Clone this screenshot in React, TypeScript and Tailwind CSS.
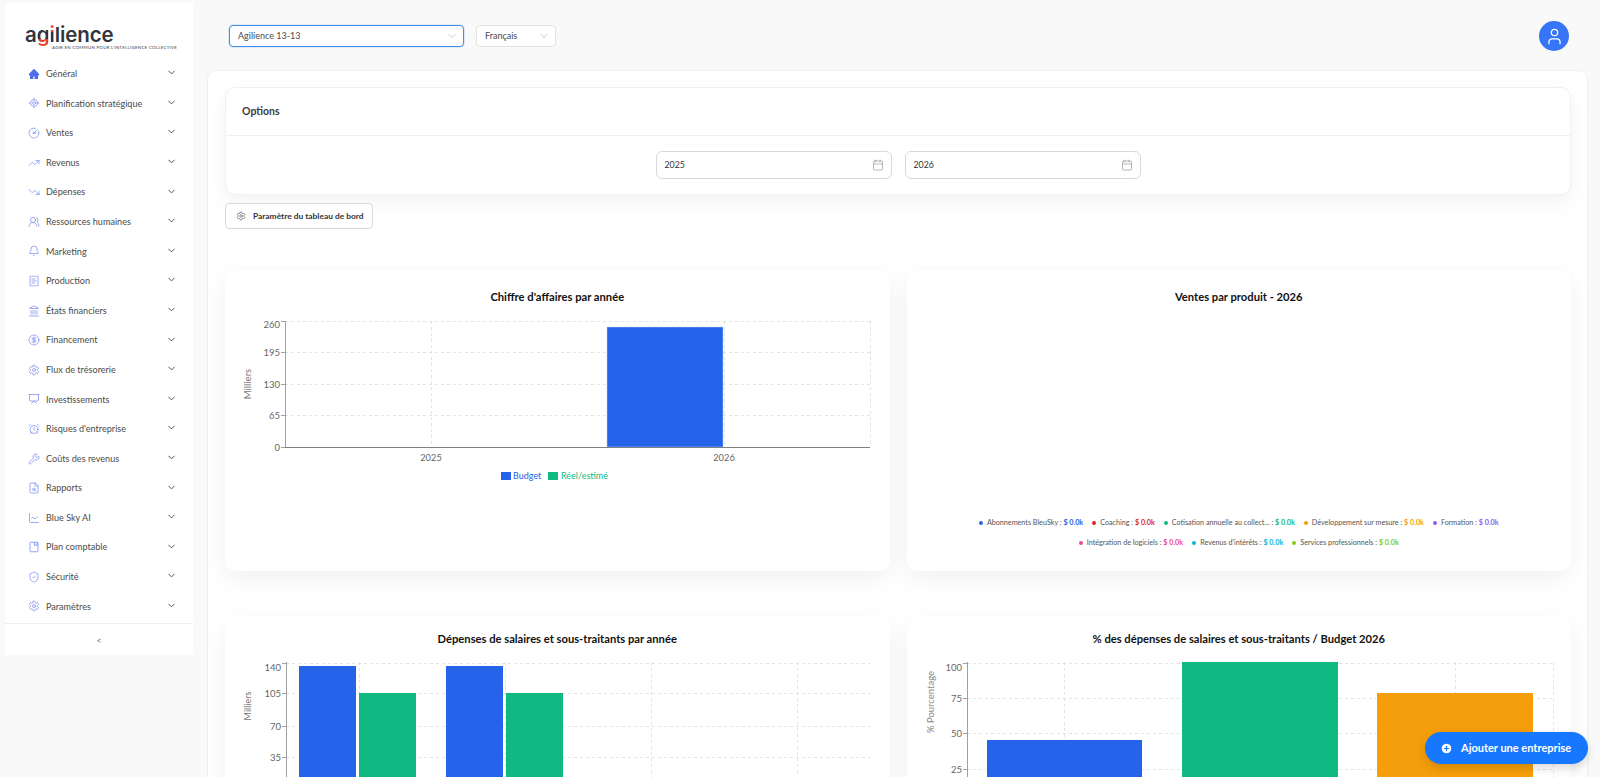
import {
  LocateFixed, CircleGauge, TrendingUp, TrendingDown, UsersRound, Bell, ReceiptText, Landmark, CircleDollarSign,
  Settings, Presentation, AlarmClock, Wrench, FileSearch, ChartLine, ShieldCheck, ChevronDown,
  Calendar, User, CirclePlus,
} from "lucide-react";
import { AiFillHome } from "react-icons/ai";

const font = "font-['Lato','Noto_Sans',sans-serif]";

function PlanIcon({ className }: { className?: string }) {
  return (
    <svg viewBox="0 0 24 24" fill="none" stroke="currentColor" strokeWidth={1.6} className={className}>
      <rect x="4" y="2.5" width="16" height="19" rx="1.5" />
      <path d="M13 2.5v7l2.5-2 2.5 2v-7" />
    </svg>
  );
}

const menuItems = [
  { label: "Général", icon: AiFillHome, solid: true },
  { label: "Planification stratégique", icon: LocateFixed },
  { label: "Ventes", icon: CircleGauge },
  { label: "Revenus", icon: TrendingUp },
  { label: "Dépenses", icon: TrendingDown },
  { label: "Ressources humaines", icon: UsersRound },
  { label: "Marketing", icon: Bell },
  { label: "Production", icon: ReceiptText },
  { label: "États financiers", icon: Landmark },
  { label: "Financement", icon: CircleDollarSign },
  { label: "Flux de trésorerie", icon: Settings },
  { label: "Investissements", icon: Presentation },
  { label: "Risques d'entreprise", icon: AlarmClock },
  { label: "Coûts des revenus", icon: Wrench },
  { label: "Rapports", icon: FileSearch },
  { label: "Blue Sky AI", icon: ChartLine },
  { label: "Plan comptable", icon: PlanIcon },
  { label: "Sécurité", icon: ShieldCheck },
  { label: "Paramètres", icon: Settings },
];

const legendTop = [
  { name: "Abonnements BleuSky", dot: "bg-[#2563eb]", value: "text-[#2563eb]" },
  { name: "Coaching", dot: "bg-[#dc2626]", value: "text-[#dc2626]" },
  { name: "Cotisation annuelle au collect...", dot: "bg-[#10b981]", value: "text-[#10b981]" },
  { name: "Développement sur mesure", dot: "bg-[#f59e0b]", value: "text-[#f59e0b]" },
  { name: "Formation", dot: "bg-[#8b5cf6]", value: "text-[#8b5cf6]" },
];
const legendBottom = [
  { name: "Intégration de logiciels", dot: "bg-[#ec4899]", value: "text-[#ec4899]" },
  { name: "Revenus d'intérêts", dot: "bg-[#06b6d4]", value: "text-[#06b6d4]" },
  { name: "Services professionnels", dot: "bg-[#84cc16]", value: "text-[#84cc16]" },
];

function Sidebar() {
  return (
    <aside className="w-[188px] ml-[5px] mt-[3px] h-[652px] shrink-0 bg-white flex flex-col">
      <div className="h-[56px] pl-[20px] pt-[20px] shrink-0">
        <div className="relative leading-none">
          <div className="font-['Inter',sans-serif] font-semibold text-[20.5px] tracking-[-0.1px] text-[#33353c] leading-[24px]">
            a<span className="bg-[linear-gradient(180deg,#33353c_68%,#e5432f_68%)] bg-clip-text text-transparent">g</span>
            <span className="bg-[linear-gradient(180deg,#e5432f_42%,#33353c_42%)] bg-clip-text text-transparent">i</span>lience
          </div>
          <div className="absolute left-[27px] top-[22px] text-[4.5px] leading-[6px] whitespace-nowrap tracking-[0.2px] text-[#45484f]">
            AGIR EN COMMUN POUR L'INTELLIGENCE COLLECTIVE
          </div>
        </div>
      </div>
      <nav className="flex flex-col">
        {menuItems.map((item) => (
          <div key={item.label} className="h-[29.6px] pl-[23px] pr-[16px] flex items-center">
            <item.icon
              className={`w-[12px] h-[12px] mr-[6px] shrink-0 ${item.solid ? "text-[#4f6fe8]" : "text-[#7c8ff0]"}`}
              strokeWidth={1.5}
            />
            <span className="text-[9.1px] text-[#4b4b4b] whitespace-nowrap">{item.label}</span>
            <ChevronDown className="w-[11px] h-[11px] ml-auto -mt-[2px] text-[#444]" strokeWidth={2} />
          </div>
        ))}
      </nav>
      <div className="mt-[2px] pt-[2px] border-t border-[#eeeeee] flex-1 flex items-center justify-center text-[9px] text-[#777]">
        &lt;
      </div>
    </aside>
  );
}

function Dropdown({ label, className }: { label: string; className: string }) {
  return (
    <div className={`h-[22px] bg-white rounded-[4px] flex items-center justify-between pl-[8px] pr-[5px] ${className}`}>
      <span className="text-[9px] text-[#4b4b4b]">{label}</span>
      <ChevronDown className="w-[12px] h-[12px] text-[#b5b5b5]" strokeWidth={1.5} />
    </div>
  );
}

function DateField({ value }: { value: string }) {
  return (
    <div className="w-[236px] h-[28px] border border-[#d9d9d9] rounded-[6px] bg-white flex items-center justify-between pl-[8px] pr-[7px]">
      <span className="text-[8.8px] text-[#333]">{value}</span>
      <Calendar className="w-[12px] h-[12px] text-[#9a9a9a]" strokeWidth={1.4} />
    </div>
  );
}

function Grid({ x0, x1, ys, xs, top, bottom }: { x0: number; x1: number; ys: number[]; xs: number[]; top: number; bottom: number }) {
  return (
    <g stroke="#e3e3e3" strokeWidth="1" strokeDasharray="3 3" shapeRendering="crispEdges">
      {ys.map((y) => (
        <line key={y} x1={x0} x2={x1} y1={y} y2={y} />
      ))}
      {xs.map((x) => (
        <line key={x} x1={x} x2={x} y1={top} y2={bottom} />
      ))}
    </g>
  );
}

function YAxis({ x, top, bottom, ticks }: { x: number; top: number; bottom: number; ticks: { y: number; label: string; ty?: number }[] }) {
  return (
    <g>
      <line x1={x} x2={x} y1={top} y2={bottom} stroke="#a0a0a0" shapeRendering="crispEdges" />
      {ticks.map((t) => (
        <g key={t.label}>
          <line x1={x - 4} x2={x} y1={t.y} y2={t.y} stroke="#a0a0a0" shapeRendering="crispEdges" />
          <text x={x - 5} y={(t.ty ?? t.y) + 3.5} textAnchor="end" fontSize="9.5" fill="#666">
            {t.label}
          </text>
        </g>
      ))}
    </g>
  );
}

function RevenueChart() {
  // coordinates are local to the card, which starts at x=225, y=270
  return (
    <svg width="664" height="225" className={`absolute left-[1px] top-[48px] ${font}`}>
      <Grid x0={59} x1={644} ys={[3, 34, 66, 97]} xs={[205, 498, 644]} top={3} bottom={129} />
      <rect x={381} y={9} width={116} height={120} fill="#2563eb" stroke="#bcd0f7" strokeWidth="0.5" />
      <YAxis x={59} top={3} bottom={129} ticks={[{ y: 3, label: "260", ty: 6 }, { y: 34, label: "195" }, { y: 66, label: "130" }, { y: 97, label: "65" }, { y: 129, label: "0" }]} />
      <line x1={59} x2={644} y1={129} y2={129} stroke="#808080" shapeRendering="crispEdges" />
      <text x={205} y={143} textAnchor="middle" fontSize="9.3" fill="#666">2025</text>
      <text x={498} y={143} textAnchor="middle" fontSize="9.3" fill="#666">2026</text>
      <text transform="translate(25 66) rotate(-90)" textAnchor="middle" fontSize="9.5" fill="#777">Milliers</text>
      <rect x={275} y={154} width={10} height={8} fill="#2563eb" />
      <text x={287} y={161} fontSize="9" fill="#2563eb">Budget</text>
      <rect x={322} y={154} width={10} height={8} fill="#10b981" />
      <text x={335} y={161} fontSize="9" fill="#10b981">Réel/estimé</text>
    </svg>
  );
}

function SalaryChart() {
  // card starts at x=225, y=617
  return (
    <svg width="664" height="115" className={`absolute left-[1px] top-[45px] ${font}`}>
      <Grid x0={60} x1={644} ys={[1, 31, 64, 95]} xs={[133, 279, 425, 571]} top={0} bottom={115} />
      <rect x={73} y={4} width={57} height={111} fill="#2563eb" />
      <rect x={133} y={31} width={57} height={84} fill="#10b981" />
      <rect x={220} y={4} width={57} height={111} fill="#2563eb" />
      <rect x={280} y={31} width={57} height={84} fill="#10b981" />
      <YAxis x={60} top={0} bottom={115} ticks={[{ y: 1, label: "140", ty: 5 }, { y: 31, label: "105" }, { y: 64, label: "70" }, { y: 95, label: "35" }]} />
      <text transform="translate(25 44) rotate(-90)" textAnchor="middle" fontSize="9" fill="#777">Milliers</text>
    </svg>
  );
}

function PercentChart() {
  // card starts at x=907, y=617
  return (
    <svg width="664" height="115" className={`absolute left-0 top-[45px] ${font}`}>
      <Grid x0={60} x1={646} ys={[1, 36, 71, 107]} xs={[157, 353, 548, 646]} top={0} bottom={115} />
      <rect x={80} y={78} width={155} height={37} fill="#2563eb" />
      <rect x={275} y={0} width={156} height={115} fill="#10b981" />
      <rect x={470} y={31} width={156} height={84} fill="#f59e0b" />
      <YAxis x={60} top={0} bottom={115} ticks={[{ y: 1, label: "100", ty: 5 }, { y: 36, label: "75" }, { y: 71, label: "50" }, { y: 107, label: "25" }]} />
      <text transform="translate(27 40) rotate(-90)" textAnchor="middle" fontSize="9.5" fill="#888">% Pourcentage</text>
    </svg>
  );
}

function ChartCard({ title, children, titleClass }: { title: string; children?: React.ReactNode; titleClass: string }) {
  return (
    <div className="relative h-[301px] bg-white rounded-[10px] shadow-[0_8px_24px_rgba(0,0,0,0.06)]">
      <h3 className={`absolute inset-x-0 text-center text-[11.2px] font-bold text-[#111] ${titleClass}`}>{title}</h3>
      {children}
    </div>
  );
}

function LegendRow({ items }: { items: typeof legendTop }) {
  return (
    <div className="flex justify-center gap-[9px] text-[7.2px] text-[#555] whitespace-nowrap">
      {items.map((i) => (
        <span key={i.name} className="flex items-center">
          <span className={`w-[4px] h-[4px] rounded-full mr-[4px] ${i.dot}`} />
          {i.name}&nbsp;:&nbsp;<span className={`font-bold ${i.value}`}>$ 0.0k</span>
        </span>
      ))}
    </div>
  );
}

export default function App() {
  return (
    <div className={`w-[1600px] h-[777px] overflow-hidden bg-[#f9f9f9] flex ${font}`}>
      <Sidebar />
      <main className="flex-1 min-w-0 pl-[14px] pr-[12px] relative">
        <div className="h-[70px] flex items-start">
          <div className="mt-[25px] flex gap-[12px] ml-[22px]">
            <Dropdown label="Agilience 13-13" className="w-[235px] border border-[#3f8fe8] shadow-[0_0_0_1px_rgba(63,143,232,0.15)]" />
            <Dropdown label="Français" className="w-[80px] border border-[#e2e2e2]" />
          </div>
          <div className="ml-auto mr-[19px] mt-[21px] w-[30px] h-[30px] rounded-full bg-[#3575f6] flex items-center justify-center">
            <User className="w-[19px] h-[19px] text-white" strokeWidth={1.6} />
          </div>
        </div>
        <div className="bg-white rounded-[10px] border border-[#efefef] h-[800px] pt-[16px] pl-[17px] pr-[16px]">
          <section className="h-[108px] rounded-[10px] border border-[#f0f0f0] shadow-[0_8px_20px_rgba(0,0,0,0.05)] bg-white">
            <div className="h-[48px] border-b border-[#f0f0f0] flex items-center pl-[16px] text-[10.5px] font-bold text-[#3a3a3a]">
              Options
            </div>
            <div className="flex justify-center gap-[13px] pt-[15px]">
              <DateField value="2025" />
              <DateField value="2026" />
            </div>
          </section>
          <button className="mt-[8px] w-[148px] h-[26px] border border-[#d9d9d9] rounded-[4px] bg-white flex items-center pl-[10px] text-[8.4px] font-bold text-[#333] whitespace-nowrap">
            <Settings className="w-[10px] h-[10px] mr-[7px] shrink-0 text-[#555]" strokeWidth={1.5} />
            Paramètre du tableau de bord
          </button>
          <div className="mt-[41px] grid grid-cols-2 gap-x-[17px] gap-y-[46px]">
            <ChartCard title="Chiffre d'affaires par année" titleClass="top-[19px]">
              <RevenueChart />
            </ChartCard>
            <ChartCard title="Ventes par produit - 2026" titleClass="top-[19px]">
              <div className="absolute inset-x-0 top-[248px] flex flex-col gap-[9px]">
                <LegendRow items={legendTop} />
                <LegendRow items={legendBottom} />
              </div>
            </ChartCard>
            <ChartCard title="Dépenses de salaires et sous-traitants par année" titleClass="top-[14px]">
              <SalaryChart />
            </ChartCard>
            <ChartCard title="% des dépenses de salaires et sous-traitants / Budget 2026" titleClass="top-[14px]">
              <PercentChart />
            </ChartCard>
          </div>
        </div>
        <button className="absolute right-[12px] top-[732px] w-[163px] h-[32px] rounded-full bg-[#1677ff] shadow-[0_4px_10px_rgba(0,0,0,0.15)] flex items-center pl-[15px] gap-[8px] text-white text-[11px] font-bold whitespace-nowrap">
          <CirclePlus className="w-[13px] h-[13px] fill-white text-[#1677ff]" strokeWidth={2.2} />
          Ajouter une entreprise
        </button>
      </main>
    </div>
  );
}
